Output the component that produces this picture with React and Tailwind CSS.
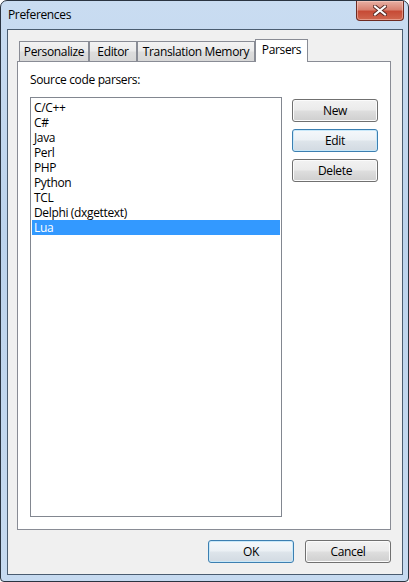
import React from "react";

const parsers = ["C/C++", "C#", "Java", "Perl", "PHP", "Python", "TCL", "Delphi (dxgettext)", "Lua"];

function CloseButton() {
  return (
    <div className="-mr-px flex h-[20px] w-[48px] items-center justify-center rounded-b-[4px] border border-t-0 border-[#6e2b22] bg-[linear-gradient(to_bottom,#e8b0a4_0%,#d98271_45%,#c74b36_55%,#d0674f_100%)] shadow-[inset_0_0_0_1px_rgba(255,220,210,0.45)]">
      <svg width="14" height="11" viewBox="0 0 14 11">
        <path d="M2 1.5 L12 9.5 M12 1.5 L2 9.5" stroke="#5a2b26" strokeWidth="4" strokeLinecap="square" />
        <path d="M2 1.5 L12 9.5 M12 1.5 L2 9.5" stroke="#ffffff" strokeWidth="2" strokeLinecap="square" />
      </svg>
    </div>
  );
}

function Tab({ label, width, active = false }) {
  if (active) {
    return (
      <div className={`relative z-10 -mb-px flex h-[23px] ${width} items-start justify-center border border-b-0 border-[#898c95] bg-white pt-[2px]`}>
        {label}
      </div>
    );
  }
  return (
    <div className={`flex h-[20px] ${width} items-center justify-center whitespace-nowrap border border-b-0 border-[#898c95] bg-[linear-gradient(to_bottom,#f3f3f3_0%,#ebebeb_45%,#dddddd_55%,#d7d7d7_100%)] pt-[1px]`}>
      {label}
    </div>
  );
}

function WinButton({ children, primary = false }) {
  return (
    <button
      type="button"
      className={`flex h-[23px] w-[86px] items-center justify-center rounded-[3px] border text-[12px] text-black ${
        primary
          ? "border-[#3c7fb1] bg-[linear-gradient(to_bottom,#f4f8fb_0%,#ecf1f5_45%,#dde4ea_55%,#d2dae2_100%)] shadow-[inset_0_0_0_1px_#c8e8f9]"
          : "border-[#707070] bg-[linear-gradient(to_bottom,#f2f2f2_0%,#ebebeb_45%,#dddddd_55%,#cfcfcf_100%)] shadow-[inset_0_0_0_1px_#fbfbfb]"
      }`}
    >
      {children}
    </button>
  );
}

export default function App() {
  return (
    <div className="flex h-[582px] w-[409px] flex-col rounded-t-[7px] rounded-b-[4px] border border-[#2a3441] bg-[linear-gradient(to_bottom,#c9dcf1_0%,#bcd3ec_40%,#c6daf0_100%)] pb-[6px] pl-[6px] pr-[5px] font-['Open_Sans',sans-serif] text-[12px] leading-[16px] tracking-[-0.35px] text-black">
      <div className="flex h-[28px] items-start justify-between">
        <span className="pl-[1px] pt-[6px] text-[12px] text-black">Preferences</span>
        <CloseButton />
      </div>
      <div className="flex flex-1 flex-col border border-[#4a5c70] bg-[#f0f0f0] pl-[9px] pr-[11px] pt-[9px] pb-[11px]">
        <div className="flex h-[22px] items-end pl-[2px]">
          <Tab label="Personalize" width="w-[70px]" />
          <Tab label="Editor" width="w-[48px]" />
          <Tab label="Translation Memory" width="w-[118px]" />
          <Tab label="Parsers" width="w-[53px]" active />
        </div>
        <div className="flex h-[469px] flex-col border border-[#898c95] bg-white px-[12px] pt-[10px] pb-[12px]">
          <div className="h-[16px]">Source code parsers:</div>
          <div className="mt-[9px] flex flex-1 gap-[10px]">
            <ul className="w-[252px] border border-[#828790] bg-white px-px pt-[2px]">
              {parsers.map((p) => (
                <li
                  key={p}
                  className={`flex h-[15px] items-center pl-[2px] leading-[15px] ${p === "Lua" ? "bg-[#3399ff] text-white" : ""}`}
                >
                  {p}
                </li>
              ))}
            </ul>
            <div className="mt-[2px] flex flex-col gap-[7px]">
              <WinButton>New</WinButton>
              <WinButton primary>Edit</WinButton>
              <WinButton>Delete</WinButton>
            </div>
          </div>
        </div>
        <div className="mt-[10px] flex justify-end gap-[11px]">
          <WinButton primary>OK</WinButton>
          <WinButton>Cancel</WinButton>
        </div>
      </div>
    </div>
  );
}
